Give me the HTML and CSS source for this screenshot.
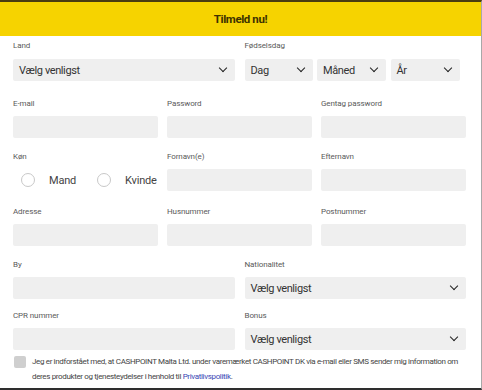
FILE: index.html
```html
<!DOCTYPE html>
<html lang="da">
<head>
<meta charset="utf-8">
<title>Tilmeld nu!</title>
<link rel="stylesheet" href="styles.css">
</head>
<body>
<div class="page">
  <header class="head">Tilmeld nu!</header>
  <form class="form">
    <div class="row two">
      <div class="field">
        <label class="lbl">Land</label>
        <div class="sel">Vælg venligst<span class="chev"></span></div>
      </div>
      <div class="field">
        <label class="lbl">Fødselsdag</label>
        <div class="birth">
          <div class="sel">Dag<span class="chev"></span></div>
          <div class="sel">Måned<span class="chev"></span></div>
          <div class="sel">År<span class="chev"></span></div>
        </div>
      </div>
    </div>

    <div class="row three r2">
      <div class="field"><label class="lbl">E-mail</label><div class="inp"></div></div>
      <div class="field"><label class="lbl">Password</label><div class="inp"></div></div>
      <div class="field"><label class="lbl">Gentag password</label><div class="inp"></div></div>
    </div>

    <div class="row three r3">
      <div class="field">
        <label class="lbl">Køn</label>
        <div class="radios">
          <span class="radio"><span class="circle"></span>Mand</span>
          <span class="radio"><span class="circle"></span>Kvinde</span>
        </div>
      </div>
      <div class="field"><label class="lbl">Fornavn(e)</label><div class="inp"></div></div>
      <div class="field"><label class="lbl">Efternavn</label><div class="inp"></div></div>
    </div>

    <div class="row three r4">
      <div class="field"><label class="lbl">Adresse</label><div class="inp"></div></div>
      <div class="field"><label class="lbl">Husnummer</label><div class="inp"></div></div>
      <div class="field"><label class="lbl">Postnummer</label><div class="inp"></div></div>
    </div>

    <div class="row two r5">
      <div class="field"><label class="lbl">By</label><div class="inp"></div></div>
      <div class="field"><label class="lbl">Nationalitet</label><div class="sel">Vælg venligst<span class="chev"></span></div></div>
    </div>

    <div class="row two r6">
      <div class="field"><label class="lbl">CPR nummer</label><div class="inp"></div></div>
      <div class="field"><label class="lbl">Bonus</label><div class="sel">Vælg venligst<span class="chev"></span></div></div>
    </div>

    <div class="check">
      <span class="box"></span>
      <p class="ctext">Jeg er indforstået med, at CASHPOINT Malta Ltd. under varemærket CASHPOINT DK via e-mail eller SMS sender mig information om deres produkter og tjenesteydelser i henhold til <a class="link" href="#">Privatlivspolitik</a>.</p>
    </div>
    <div class="check">
      <span class="box"></span>
    </div>
  </form>
</div>
</body>
</html>
```
FILE: styles.css
```css
* { box-sizing: border-box; }
html, body { margin: 0; padding: 0; background: #fff; }
body { font-family: Roboto, "Noto Sans", sans-serif; }

.page {
  width: 482px;
  height: 390px;
  overflow: hidden;
  border-top: 2px solid #4a3c10;
  border-bottom: 2px solid #2e2e2e;
  border-right: 1px solid #a8a8a8;
  background: #fff;
}

.head {
  height: 34px;
  background: #f6d300;
  color: #3d3200;
  font-weight: 700;
  font-size: 11.5px;
  letter-spacing: -0.4px;
  display: flex;
  align-items: center;
  justify-content: center;
}

.form {
  padding: 5px 15px 0 13px;
}

.row { display: grid; }
.row.two { grid-template-columns: 1fr 1fr; column-gap: 10px; }
.row.three { grid-template-columns: 145px 145px 145px; column-gap: 9px; }
.r2 { margin-top: 18px; }
.r3 { margin-top: 14px; }
.r4 { margin-top: 16px; }
.r5 { margin-top: 14px; }
.r6 { margin-top: 12px; }

.field { display: flex; flex-direction: column; gap: 7px; }
.row.two:first-child .field { gap: 8px; }

.lbl {
  display: block;
  height: 10px;
  line-height: 10px;
  font-size: 8px;
  color: #5a5a5a;
  letter-spacing: -0.1px;
}

.inp, .sel {
  height: 22px;
  background: #efefef;
  border-radius: 2px;
}

.sel {
  position: relative;
  display: flex;
  align-items: center;
  padding-left: 6px;
  font-size: 11px;
  color: #333;
  letter-spacing: -0.4px;
}

.chev {
  position: absolute;
  right: 9px;
  top: 6px;
  width: 6px;
  height: 6px;
  border-right: 1.6px solid #222;
  border-bottom: 1.6px solid #222;
  transform: rotate(45deg);
}

.birth {
  display: grid;
  grid-template-columns: 68px 69px 69px;
  column-gap: 4.5px;
}

.radios {
  height: 22px;
  display: flex;
  align-items: center;
  padding-left: 8px;
  gap: 21px;
}
.radio {
  display: flex;
  align-items: center;
  gap: 8px;
  font-size: 11px;
  color: #444;
  letter-spacing: -0.2px;
}
.circle {
  width: 14px;
  height: 14px;
  border: 1px solid #c8c8c8;
  border-radius: 50%;
  margin-right: 6px;
}

.check {
  display: flex;
  gap: 6px;
  margin-top: 6px;
  align-items: flex-start;
}
.box {
  flex: none;
  width: 12px;
  height: 12px;
  background: #cfcfcf;
  border-radius: 2px;
  margin-left: 1px;
}
.ctext {
  margin: 0;
  font-size: 8px;
  line-height: 15px;
  margin-top: -2px;
  color: #444;
  letter-spacing: -0.35px;
}
.link { color: #3947b5; text-decoration: none; }
```
